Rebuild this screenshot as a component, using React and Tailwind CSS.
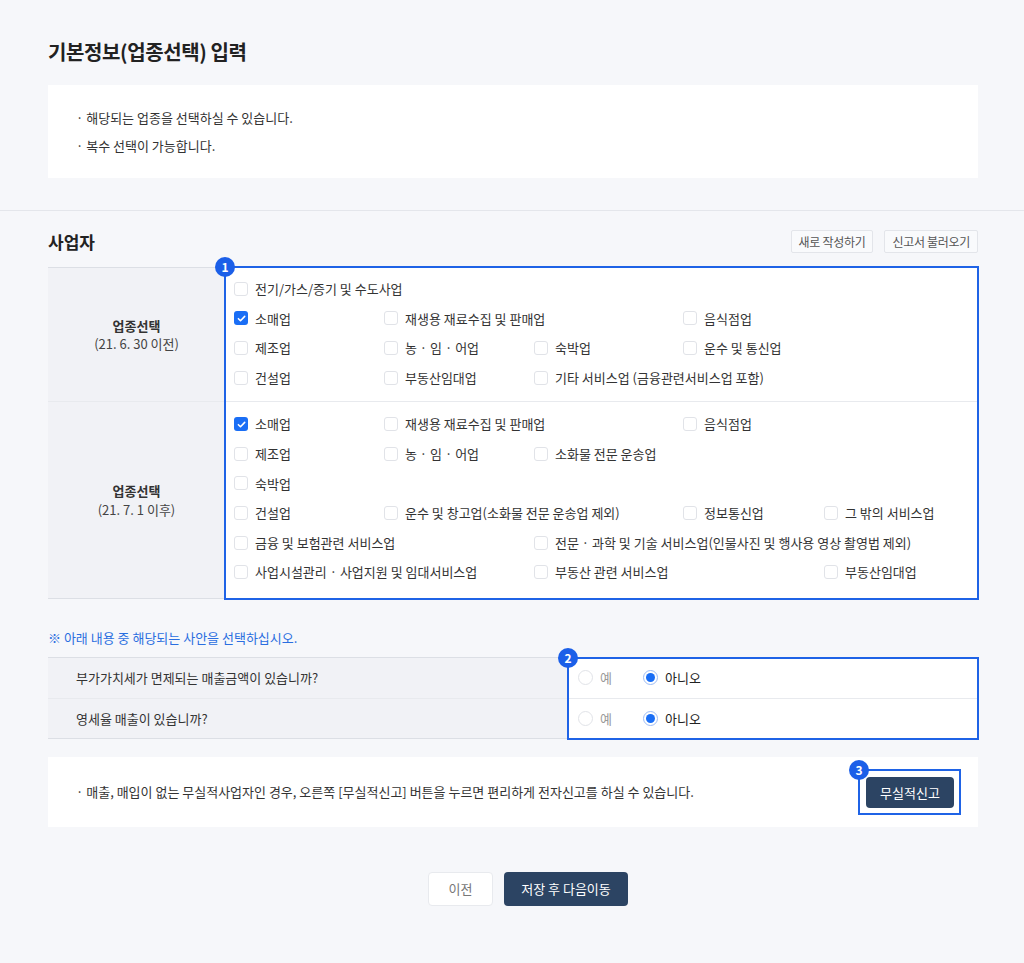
import React from 'react';

const FONT = "font-['Noto_Sans_CJK_KR','Noto_Sans',sans-serif]";

const COL_START = {
  1: 'col-start-1',
  2: 'col-start-2',
  3: 'col-start-3',
  4: 'col-start-4',
  5: 'col-start-5',
};

const BEFORE = [
  [[1, '전기/가스/증기 및 수도사업']],
  [[1, '소매업', true], [2, '재생용 재료수집 및 판매업'], [4, '음식점업']],
  [[1, '제조업'], [2, '농 · 임 · 어업'], [3, '숙박업'], [4, '운수 및 통신업']],
  [[1, '건설업'], [2, '부동산임대업'], [3, '기타 서비스업 (금융관련서비스업 포함)']],
];

const AFTER = [
  [[1, '소매업', true], [2, '재생용 재료수집 및 판매업'], [4, '음식점업']],
  [[1, '제조업'], [2, '농 · 임 · 어업'], [3, '소화물 전문 운송업']],
  [[1, '숙박업']],
  [[1, '건설업'], [2, '운수 및 창고업(소화물 전문 운송업 제외)'], [4, '정보통신업'], [5, '그 밖의 서비스업']],
  [[1, '금융 및 보험관련 서비스업'], [3, '전문 · 과학 및 기술 서비스업(인물사진 및 행사용 영상 촬영법 제외)']],
  [[1, '사업시설관리 · 사업지원 및 임대서비스업'], [3, '부동산 관련 서비스업'], [5, '부동산임대업']],
];

const QUESTIONS = ['부가가치세가 면제되는 매출금액이 있습니까?', '영세율 매출이 있습니까?'];

function Badge({ n }) {
  return (
    <span className="absolute -left-[11px] -top-[11px] flex size-[20px] items-center justify-center rounded-full bg-[#1b5fe8] text-[12px] font-bold leading-none text-white">
      {n}
    </span>
  );
}

function Check({ label, checked }) {
  return (
    <label className="flex items-center gap-[7px] whitespace-nowrap">
      {checked ? (
        <span className="flex size-[14px] shrink-0 items-center justify-center rounded-[3px] bg-[#1a6ef5]">
          <svg viewBox="0 0 12 12" className="size-[11px]">
            <path d="M2.6 6.2l2.3 2.3 4.6-4.8" fill="none" stroke="white" strokeWidth="1.7" strokeLinecap="round" strokeLinejoin="round" />
          </svg>
        </span>
      ) : (
        <span className="size-[14px] shrink-0 rounded-[3px] border border-[#e1e3e8] bg-white" />
      )}
      <span className="text-[13px] text-[#333]">{label}</span>
    </label>
  );
}

function Radio({ label, checked }) {
  return (
    <label className="flex items-center gap-[7px]">
      {checked ? (
        <span className="flex size-[15px] shrink-0 items-center justify-center rounded-full border border-[#9dbcf5] bg-white">
          <span className="size-[9px] rounded-full bg-[#1a6ef5]" />
        </span>
      ) : (
        <span className="size-[15px] shrink-0 rounded-full border border-[#e1e3e8] bg-white" />
      )}
      <span className={`text-[13px] ${checked ? 'text-[#222]' : 'text-[#999]'}`}>{label}</span>
    </label>
  );
}

function CheckRows({ rows }) {
  return rows.map((row, i) => (
    <div key={i} className="grid h-[29.6px] grid-cols-[150px_150px_149px_141px_1fr] items-center">
      {row.map(([col, label, checked]) => (
        <div key={label} className={COL_START[col]}>
          <Check label={label} checked={checked} />
        </div>
      ))}
    </div>
  ));
}

function LabelCell({ sub }) {
  return (
    <div className="flex w-[177px] shrink-0 flex-col items-center justify-center bg-[#f1f2f6]">
      <span className="text-[13px] font-bold text-[#333]">업종선택</span>
      <span className="text-[13px] leading-[18px] text-[#444]">{sub}</span>
    </div>
  );
}

export default function App() {
  return (
    <div className={`min-h-screen bg-[#f6f7fa] pb-[57px] ${FONT}`}>
      <div className="pl-12 pr-[46px] pt-[38px]">
        <h1 className="text-[20px] font-bold leading-[28px] tracking-[-0.4px] text-[#222]">기본정보(업종선택) 입력</h1>
        <div className="mt-[19px] bg-white pb-[18px] pl-7 pt-[19px] text-[13px] leading-[28px] text-[#333]">
          <p>· 해당되는 업종을 선택하실 수 있습니다.</p>
          <p>· 복수 선택이 가능합니다.</p>
        </div>
      </div>

      <div className="mt-8 border-t border-[#e4e6eb] pl-12 pr-[46px] pt-[19px]">
        <div className="flex h-[23px] items-center justify-between">
          <h2 className="text-[17px] font-bold text-[#222]">사업자</h2>
          <div className="flex gap-[11px]">
            <button className="h-[23px] rounded-[2px] border border-[#e3e5ea] bg-[#f9fafc] px-[7px] text-[12px] tracking-[-0.3px] text-[#555]">새로 작성하기</button>
            <button className="h-[23px] rounded-[2px] border border-[#e3e5ea] bg-[#f9fafc] px-[7px] text-[12px] tracking-[-0.3px] text-[#555]">신고서 불러오기</button>
          </div>
        </div>

        <div className="relative mt-[14px] border-y border-[#dcdfe5]">
          <div className="flex border-b border-[#e8eaee]">
            <LabelCell sub="(21. 6. 30 이전)" />
            <div className="flex-1 bg-white pb-[9px] pl-[9px] pt-[6px]">
              <CheckRows rows={BEFORE} />
            </div>
          </div>
          <div className="flex">
            <LabelCell sub="(21. 7. 1 이후)" />
            <div className="flex-1 bg-white pb-[11px] pl-[9px] pt-[7px]">
              <CheckRows rows={AFTER} />
            </div>
          </div>
          <div className="pointer-events-none absolute -bottom-[2px] -right-[1px] -top-[2px] left-[176px] border-2 border-[#1f63e6]">
            <Badge n="1" />
          </div>
        </div>

        <p className="mt-[29px] text-[13px] leading-[20px] text-[#2a6ee0]">※ 아래 내용 중 해당되는 사안을 선택하십시오.</p>

        <div className="relative mt-[9px] border-y border-[#dcdfe5]">
          {QUESTIONS.map((q, i) => (
            <div key={q} className={`flex h-[40px] ${i > 0 ? 'border-t border-[#e8eaee]' : ''}`}>
              <div className="flex w-[520px] items-center bg-[#f1f2f6] pl-7 text-[13px] text-[#333]">{q}</div>
              <div className="flex flex-1 items-center gap-[31px] bg-white pl-[10px]">
                <Radio label="예" />
                <Radio label="아니오" checked />
              </div>
            </div>
          ))}
          <div className="pointer-events-none absolute -bottom-[2px] -right-[1px] -top-[1px] left-[519px] border-2 border-[#1f63e6]">
            <Badge n="2" />
          </div>
        </div>

        <div className="mt-[18px] flex h-[70px] items-center justify-between bg-white pl-7 pr-[17px]">
          <p className="text-[13px] text-[#333]">· 매출, 매입이 없는 무실적사업자인 경우, 오른쪽 [무실적신고] 버튼을 누르면 편리하게 전자신고를 하실 수 있습니다.</p>
          <div className="relative mt-[1px] border-2 border-[#1f63e6] pb-[5px] pl-[6px] pr-[5px] pt-[6px]">
            <Badge n="3" />
            <button className="block h-[31px] w-[88px] rounded-[4px] bg-[#2c4463] text-[13px] text-white">무실적신고</button>
          </div>
        </div>

        <div className="mt-[45px] flex justify-center gap-[11px] pl-[30px]">
          <button className="h-[34px] w-[65px] rounded-[4px] border border-[#e8eaee] bg-white text-[13px] text-[#777]">이전</button>
          <button className="h-[34px] w-[124px] rounded-[4px] bg-[#2c4463] text-[13px] text-white">저장 후 다음이동</button>
        </div>
      </div>
    </div>
  );
}
